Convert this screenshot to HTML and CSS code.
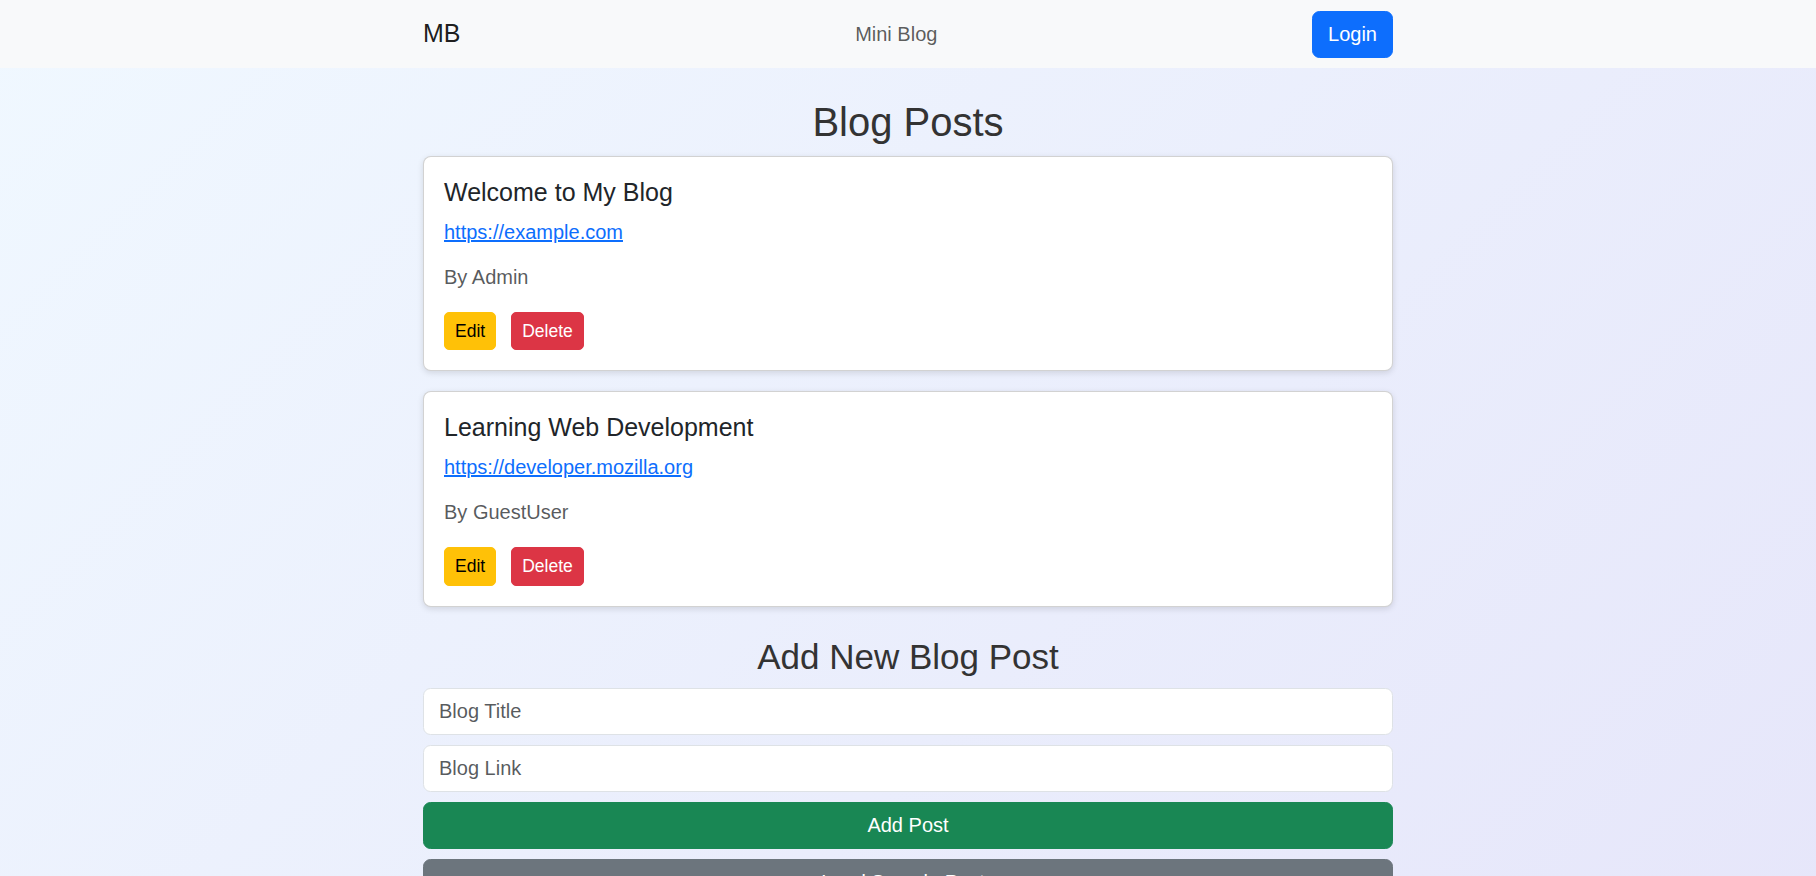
FILE: index.html
```html
<!DOCTYPE html>
<html lang="en">
<head>
<meta charset="utf-8">
<title>Mini Blog</title>
<link rel="stylesheet" href="styles.css">
</head>
<body>
<nav class="navbar">
  <div class="container nav-inner">
    <a class="brand" href="#">MB</a>
    <span class="nav-title">Mini Blog</span>
    <button class="btn btn-login">Login</button>
  </div>
</nav>

<main class="container main">
  <h2 class="page-title">Blog Posts</h2>
  <div class="post-list">
    <div class="card">
      <h5 class="card-title">Welcome to My Blog</h5>
      <p class="card-link"><a href="#">https://example.com</a></p>
      <p class="card-author">By Admin</p>
      <div class="card-actions">
        <button class="btn-sm btn-warning">Edit</button>
        <button class="btn-sm btn-danger">Delete</button>
      </div>
    </div>
    <div class="card">
      <h5 class="card-title">Learning Web Development</h5>
      <p class="card-link"><a href="#">https://developer.mozilla.org</a></p>
      <p class="card-author">By GuestUser</p>
      <div class="card-actions">
        <button class="btn-sm btn-warning">Edit</button>
        <button class="btn-sm btn-danger">Delete</button>
      </div>
    </div>
  </div>

  <section class="add-section">
    <h3 class="section-title">Add New Blog Post</h3>
    <form class="add-form">
      <input class="form-control" type="text" placeholder="Blog Title">
      <input class="form-control" type="text" placeholder="Blog Link">
      <button type="button" class="btn btn-block btn-success">Add Post</button>
      <button type="button" class="btn btn-block btn-secondary">Load Sample Posts</button>
    </form>
  </section>
</main>
</body>
</html>
```

FILE: styles.css
```css
* {
  box-sizing: border-box;
}

html, body {
  margin: 0;
  padding: 0;
}

body {
  font-family: "Liberation Sans", Arial, sans-serif;
  font-size: 20px;
  line-height: 1.5;
  color: #212529;
  background: linear-gradient(135deg, #f0f8ff, #e6e6fa);
  min-height: 100vh;
}

.container {
  width: 970px;
  margin: 0 auto;
}

/* Navbar */
.navbar {
  background: #f8f9fa;
  padding: 10px 0;
  height: 68px;
}

.nav-inner {
  display: flex;
  align-items: center;
  justify-content: space-between;
  height: 100%;
}

.brand {
  font-size: 25px;
  color: rgba(0, 0, 0, 0.9);
  text-decoration: none;
  margin-right: 20px;
  line-height: 1.5;
}

.nav-title {
  font-size: 20px;
  color: rgba(0, 0, 0, 0.65);
}

.btn {
  font-family: inherit;
  font-size: 20px;
  line-height: 1.5;
  border: 1px solid transparent;
  border-radius: 7.5px;
  padding: 7.5px 15px;
  cursor: pointer;
}

.btn-login {
  background: #0d6efd;
  border-color: #0d6efd;
  color: #fff;
}

/* Main */
.main {
  padding-top: 30px;
  padding-bottom: 30px;
}

.page-title {
  margin: 0 0 10px;
  font-size: 40px;
  font-weight: 400;
  line-height: 1.2;
  text-align: center;
  color: #333;
}

.post-list {
  display: flex;
  flex-direction: column;
  gap: 20px;
}

.card {
  background: #fff;
  border: 1px solid rgba(0, 0, 0, 0.175);
  border-radius: 8px;
  padding: 20px;
  box-shadow: 0 2px 6px rgba(0, 0, 0, 0.12);
}

.card-title {
  margin: 0 0 10px;
  font-size: 25px;
  font-weight: 400;
  line-height: 1.2;
  color: #212529;
}

.card-link {
  margin: 0 0 15px;
}

.card-link a {
  color: #0d6efd;
  text-decoration: underline;
}

.card-author {
  margin: 0 0 20px;
  color: rgba(33, 37, 41, 0.75);
}

.card-actions {
  display: flex;
  gap: 15px;
}

.btn-sm {
  font-family: inherit;
  font-size: 17.5px;
  line-height: 1.5;
  padding: 5px 10px;
  border: 1px solid transparent;
  border-radius: 5px;
  cursor: pointer;
}

.btn-warning {
  background: #ffc107;
  border-color: #ffc107;
  color: #000;
}

.btn-danger {
  background: #dc3545;
  border-color: #dc3545;
  color: #fff;
}

/* Add form */
.add-section {
  margin-top: 29px;
}

.section-title {
  margin: 0 0 10px;
  font-size: 35px;
  font-weight: 400;
  line-height: 1.2;
  text-align: center;
  color: #333;
}

.add-form {
  display: flex;
  flex-direction: column;
  gap: 10px;
}

.form-control {
  display: block;
  width: 100%;
  font-family: inherit;
  font-size: 20px;
  line-height: 1.5;
  padding: 7.5px 15px;
  color: #212529;
  background: #fff;
  border: 1px solid #dee2e6;
  border-radius: 7.5px;
  outline: none;
}

.form-control::placeholder {
  color: rgba(33, 37, 41, 0.75);
}

.btn-block {
  display: block;
  width: 100%;
}

.btn-success {
  background: #198754;
  border-color: #198754;
  color: #fff;
}

.btn-secondary {
  background: #6c757d;
  border-color: #6c757d;
  color: #fff;
}
```
